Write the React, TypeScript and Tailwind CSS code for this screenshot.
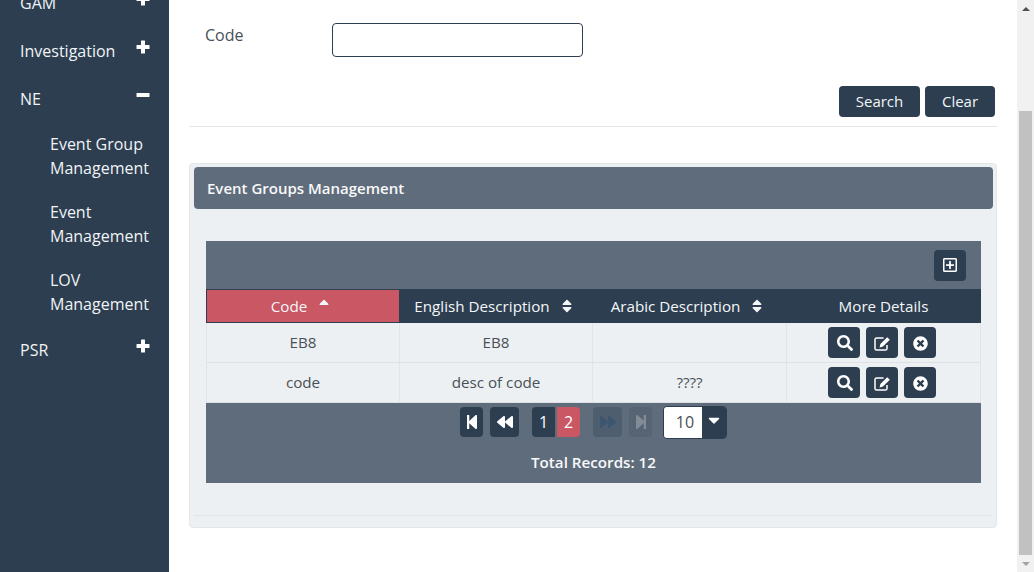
import React from "react";
import {
  FaSearch, FaTimesCircle, FaStepBackward, FaBackward,
  FaForward, FaStepForward, FaCaretDown, FaSort, FaSortUp, FaRegPlusSquare,
} from "react-icons/fa";

function PlusIcon() {
  return (
    <svg width="14" height="14" viewBox="0 0 14 14" fill="currentColor">
      <path d="M5.5 0.5h3a.5.5 0 0 1 .5.5v4h4a.5.5 0 0 1 .5.5v3a.5.5 0 0 1-.5.5H9v4a.5.5 0 0 1-.5.5h-3a.5.5 0 0 1-.5-.5V9H1a.5.5 0 0 1-.5-.5v-3A.5.5 0 0 1 1 5h4V1a.5.5 0 0 1 .5-.5z" />
    </svg>
  );
}

function MinusIcon() {
  return (
    <svg width="14" height="14" viewBox="0 0 14 14" fill="currentColor">
      <rect x="0.5" y="5" width="13" height="4" rx="0.5" />
    </svg>
  );
}

function EditIcon() {
  return (
    <svg width="17" height="15" viewBox="0 0 17 15" fill="none">
      <path d="M9.5 2H2.6A1.6 1.6 0 0 0 1 3.6v8.8A1.6 1.6 0 0 0 2.6 14h8.8a1.6 1.6 0 0 0 1.6-1.6V9" stroke="currentColor" strokeWidth="1.5" />
      <path d="M13.2 1.2 15.8 3.8 9 10.6 5.6 11.4 6.4 8z" fill="currentColor" />
    </svg>
  );
}

function NavItem({ label, icon }: { label: string; icon: React.ReactNode }) {
  return (
    <div className="flex justify-between pl-5 pr-[19px] h-[48px] items-center">
      <span>{label}</span>
      <span className="text-white -mt-2">{icon}</span>
    </div>
  );
}

function SubItem({ a, b }: { a: string; b: string }) {
  return (
    <div className="pl-[50px] pb-5 leading-6">
      {a}
      <br />
      {b}
    </div>
  );
}

function ActionBtn({ children }: { children: React.ReactNode }) {
  return (
    <button className="w-8 h-[31px] rounded bg-[#2c3e50] text-white flex items-center justify-center text-[16px] pl-[1px] pt-[1px]">
      {children}
    </button>
  );
}

function Row({ code, en, ar }: { code: string; en: string; ar: string }) {
  return (
    <div className="grid grid-cols-[194px_193px_194px_194px] h-10 border-b border-[#dee2e6] text-[#495057]">
      <div className="flex items-center justify-center border-x border-[#e1e5e9]">{code}</div>
      <div className="flex items-center justify-center border-r border-[#e1e5e9]">{en}</div>
      <div className="flex items-center justify-center border-r border-[#e1e5e9]">{ar}</div>
      <div className="flex items-center justify-center gap-[6px] border-r border-[#e1e5e9] pr-[3px]">
        <ActionBtn><FaSearch /></ActionBtn>
        <ActionBtn><EditIcon /></ActionBtn>
        <ActionBtn><FaTimesCircle className="text-[15px]" /></ActionBtn>
      </div>
    </div>
  );
}

export default function App() {
  return (
    <div className="w-[1034px] h-[572px] overflow-hidden flex bg-white text-[16px] font-['Open_Sans',sans-serif]">
      <aside className="w-[169px] shrink-0 bg-[#2c3e50] text-[#f1f3f5] overflow-hidden">
        <div className="-mt-[21px]">
          <NavItem label="GAM" icon={<PlusIcon />} />
          <NavItem label="Investigation" icon={<PlusIcon />} />
          <NavItem label="NE" icon={<MinusIcon />} />
          <div className="pt-[9px]">
            <SubItem a="Event Group" b="Management" />
            <SubItem a="Event" b="Management" />
            <SubItem a="LOV" b="Management" />
          </div>
          <div className="-mt-[10px]">
            <NavItem label="PSR" icon={<PlusIcon />} />
          </div>
        </div>
      </aside>

      <main className="flex-1 min-w-0 px-5 text-[#495057]">
        <div className="flex items-start h-[86px] pt-[23px] pl-4">
          <label className="w-[127px] leading-6">Code</label>
          <input className="w-[251px] h-[34px] rounded border border-[#2c3e50] bg-white" />
        </div>
        <div className="flex justify-end gap-[5px] pr-[2px] pb-[9px] border-b border-[#e6e8ea]">
          <button className="w-[81px] h-[31px] rounded bg-[#2c3e50] text-[#f4f6f8] text-[15px]">Search</button>
          <button className="w-[70px] h-[31px] rounded bg-[#2c3e50] text-[#f4f6f8] text-[15px]">Clear</button>
        </div>

        <section className="mt-9 h-[365px] rounded border border-[#e3e7ea] bg-[#edf0f3] px-1 pt-[3px]">
          <div className="h-[42px] rounded bg-[#5f6c7b] text-[#f8f9fa] font-semibold text-[15px] flex items-center pl-[13px] mr-[-1px]">
            Event Groups Management
          </div>
          <div className="mt-8 ml-[12px] w-[775px]">
            <div className="h-12 bg-[#5f6c7b] flex items-center justify-end pr-[15px]">
              <button className="w-8 h-[31px] rounded bg-[#2c3e50] text-white flex items-center justify-center text-[16px]">
                <FaRegPlusSquare />
              </button>
            </div>
            <div className="grid grid-cols-[193px_194px_193px_195px] h-[34px] bg-[#2c3e50] text-[#f4f6f8] text-[15.2px]">
              <div className="flex items-center justify-center gap-[9px] bg-[#c95764] border-y border-l border-[#2c3e50] pr-[3px]">
                Code <FaSortUp className="text-[16px]" />
              </div>
              <div className="flex items-center justify-center gap-[9px] pr-[3px]">
                English Description <FaSort className="text-[16px]" />
              </div>
              <div className="flex items-center justify-center gap-[9px] pr-[3px]">
                Arabic Description <FaSort className="text-[16px]" />
              </div>
              <div className="flex items-center justify-center">More Details</div>
            </div>
            <div className="text-[15.2px]">
              <Row code="EB8" en="EB8" ar="" />
              <Row code="code" en="desc of code" ar="????" />
            </div>
            <div className="h-20 bg-[#5f6c7b] pt-[3px] flex flex-col items-center">
              <div className="flex items-center h-[32px] text-[16px]">
                <button className="w-[23px] h-[30px] rounded bg-[#2c3e50] text-white flex items-center justify-center"><FaStepBackward /></button>
                <button className="w-[29px] h-[30px] rounded bg-[#2c3e50] text-white flex items-center justify-center ml-[7px]"><FaBackward /></button>
                <button className="w-[23px] h-[30px] rounded-l bg-[#2c3e50] text-white ml-[13px]">1</button>
                <button className="w-[23px] h-[30px] rounded-r bg-[#c95764] text-white ml-[2px]">2</button>
                <button className="w-[29px] h-[30px] rounded bg-[#4f5e6e] text-[#3d5670] flex items-center justify-center ml-[13px]"><FaForward /></button>
                <button className="w-[23px] h-[30px] rounded bg-[#566473] text-[#828c97] flex items-center justify-center ml-[7px]"><FaStepForward /></button>
                <div className="flex h-[33px] ml-[11px] w-[64px] rounded border border-[#2c3e50] overflow-hidden">
                  <span className="w-[38px] bg-white text-[#495057] flex items-center justify-center pl-[4px]">10</span>
                  <span className="w-[24px] bg-[#2c3e50] text-white flex items-center justify-center pb-[5px] text-[18px]"><FaCaretDown /></span>
                </div>
              </div>
              <div className="mt-[13px] text-[15.2px] font-semibold text-[#f8f9fa]">Total Records: 12</div>
            </div>
          </div>
          <div className="mt-8 border-t border-[#e1e5e9]" />
        </section>
      </main>

      <div className="w-[17px] shrink-0 bg-[#f1f1f1] flex flex-col items-center">
        <div className="h-[17px] flex items-center justify-center">
          <div className="w-0 h-0 border-x-4 border-x-transparent border-b-[4px] border-b-[#505050]" />
        </div>
        <div className="flex-1 w-full pt-[94px] px-[2px]">
          <div className="h-[444px] bg-[#c1c1c1]" />
        </div>
        <div className="h-[17px] flex items-center justify-center">
          <div className="w-0 h-0 border-x-4 border-x-transparent border-t-[4px] border-t-[#a3a3a3]" />
        </div>
      </div>
    </div>
  );
}
